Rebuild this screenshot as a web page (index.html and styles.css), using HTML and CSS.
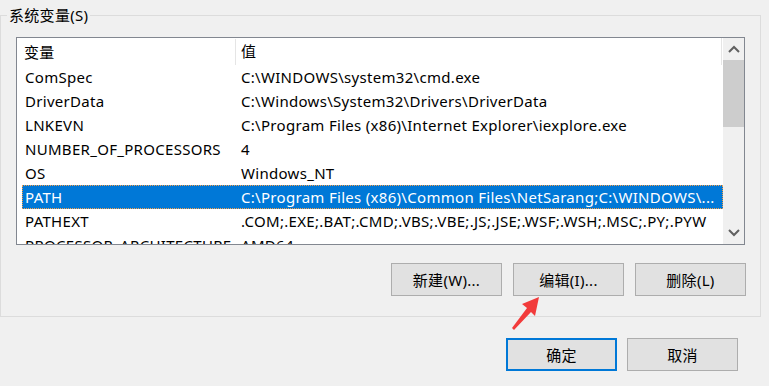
FILE: index.html
```html
<!DOCTYPE html>
<html lang="zh-CN">
<head>
    <meta charset="UTF-8">
    <title>系统变量</title>
    <link rel="stylesheet" href="styles.css">
</head>
<body>
    <div class="group">
        <span class="group-title">系统变量(S)</span>
        <div class="listbox">
            <div class="list-body">
                <div class="list-header">
                    <div class="col-name">变量</div>
                    <div class="col-value">值</div>
                </div>
                <div class="row"><div class="col-name">ComSpec</div><div class="col-value">C:\WINDOWS\system32\cmd.exe</div></div>
                <div class="row"><div class="col-name">DriverData</div><div class="col-value">C:\Windows\System32\Drivers\DriverData</div></div>
                <div class="row"><div class="col-name">LNKEVN</div><div class="col-value">C:\Program Files (x86)\Internet Explorer\iexplore.exe</div></div>
                <div class="row"><div class="col-name">NUMBER_OF_PROCESSORS</div><div class="col-value">4</div></div>
                <div class="row"><div class="col-name">OS</div><div class="col-value">Windows_NT</div></div>
                <div class="row selected"><div class="col-name">PATH</div><div class="col-value">C:\Program Files (x86)\Common Files\NetSarang;C:\WINDOWS\...</div></div>
                <div class="row"><div class="col-name">PATHEXT</div><div class="col-value">.COM;.EXE;.BAT;.CMD;.VBS;.VBE;.JS;.JSE;.WSF;.WSH;.MSC;.PY;.PYW</div></div>
                <div class="row"><div class="col-name">PROCESSOR_ARCHITECTURE</div><div class="col-value">AMD64</div></div>
            </div>
            <div class="scrollbar">
                <div class="scroll-btn">
                    <svg width="12" height="8" viewBox="0 0 12 8"><path d="M1 7 L6 2 L11 7" fill="none" stroke="#606060" stroke-width="2"/></svg>
                </div>
                <div class="scroll-track">
                    <div class="scroll-thumb"></div>
                </div>
                <div class="scroll-btn">
                    <svg width="12" height="8" viewBox="0 0 12 8"><path d="M1 1 L6 6 L11 1" fill="none" stroke="#606060" stroke-width="2"/></svg>
                </div>
            </div>
        </div>
        <div class="actions">
            <button class="btn">新建(W)...</button>
            <button class="btn">编辑(I)...</button>
            <button class="btn">删除(L)</button>
        </div>
    </div>

    <div class="dialog-actions">
        <button class="btn btn-default">确定</button>
        <button class="btn">取消</button>
    </div>

    <!-- 红色箭头标注 -->
    <svg class="arrow" width="40" height="40" viewBox="0 0 40 40">
        <polygon points="28,0 24,19 20,15 3,33 1,31 16,11 11,7" fill="#f23b3b"/>
    </svg>
</body>
</html>
```

FILE: styles.css
```css
body {
    margin: 0;
    width: 769px;
    height: 386px;
    overflow: hidden;
    background-color: #f0f0f0;
    font-family: "Noto Sans", "Noto Sans CJK SC", sans-serif;
    font-size: 15px;
    letter-spacing: 0.3px;
    color: #000;
    position: relative;
}
.group {
    position: relative;
    box-sizing: border-box;
    margin-top: 15px;
    width: 761px;
    height: 302px;
    border: 1px solid #dcdcdc;
    padding: 21px 15px 0 15px;
}
.group-title {
    position: absolute;
    top: -11px;
    left: 6px;
    padding: 0 2px;
    line-height: 20px;
    background-color: #f0f0f0;
}
.listbox {
    box-sizing: border-box;
    width: 729px;
    height: 208px;
    border: 1px solid #828790;
    background-color: white;
    display: flex;
    overflow: hidden;
}
.list-body {
    width: 706px;
    overflow: hidden;
}
.list-header {
    display: flex;
    height: 27px;
    line-height: 26px;
    box-sizing: border-box;
    border-right: 1px solid #e5e5e5;
    margin-right: 1px;
}
.list-header .col-name {
    width: 211px;
    padding-left: 7px;
    border-right: 1px solid #e5e5e5;
    margin: 1px 0 0 0;
}
.list-header .col-value {
    padding-left: 5px;
}
.row {
    display: flex;
    height: 24px;
    line-height: 24px;
    margin-left: 5px;
    white-space: nowrap;
}
.row .col-name {
    width: 216px;
    padding-left: 3px;
    box-sizing: border-box;
    overflow: hidden;
}
.row .col-value {
    flex: 1;
    min-width: 0;
    padding-left: 3px;
    overflow: hidden;
}
.row.selected {
    background-color: #0078d7;
    color: white;
    outline: 1px dotted #f5a04a;
    outline-offset: -1px;
}
.scrollbar {
    width: 21px;
    background-color: #f0f0f0;
    display: flex;
    flex-direction: column;
}
.scroll-btn {
    height: 22px;
    display: flex;
    align-items: center;
    justify-content: center;
}
.scroll-track {
    flex: 1;
}
.scroll-thumb {
    height: 67px;
    background-color: #cdcdcd;
}
.actions {
    display: flex;
    justify-content: flex-end;
    gap: 11px;
    margin-top: 18px;
    margin-right: -1px;
}
.btn {
    box-sizing: border-box;
    width: 111px;
    height: 33px;
    background-color: #e1e1e1;
    border: 1px solid #adadad;
    font-family: "Noto Sans", "Noto Sans CJK SC", sans-serif;
    font-size: 15px;
    letter-spacing: 0.3px;
    color: #000;
    padding: 0;
}
.btn-default {
    border: 2px solid #0078d7;
}
.dialog-actions {
    display: flex;
    justify-content: flex-end;
    gap: 10px;
    margin-top: 21px;
    padding-right: 31px;
}
.arrow {
    position: absolute;
    left: 511px;
    top: 297px;
}
```
